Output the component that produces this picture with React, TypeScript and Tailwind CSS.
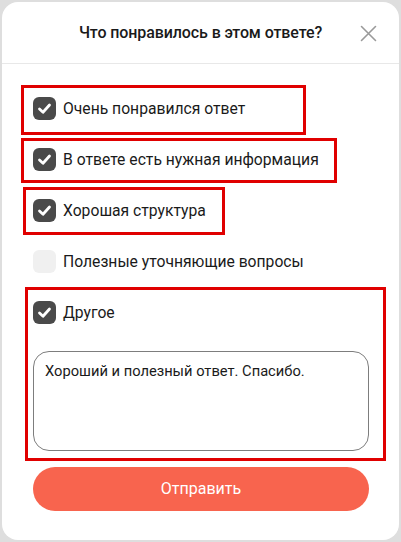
import React from "react";

const options = [
  { label: "Очень понравился ответ", checked: true },
  { label: "В ответе есть нужная информация", checked: true },
  { label: "Хорошая структура", checked: true },
  { label: "Полезные уточняющие вопросы", checked: false },
  { label: "Другое", checked: true },
];

function Checkbox({ checked }: { checked: boolean }) {
  if (!checked) {
    return <span className="block w-[23px] h-[23px] rounded-[6px] bg-[#f0f0f0]" />;
  }
  return (
    <span className="flex items-center justify-center w-[23px] h-[23px] rounded-[6px] bg-[#4a4a4a]">
      <svg width="23" height="23" viewBox="0 0 23 23" fill="none">
        <path
          d="M6.5 12 L10 15.2 L16.5 8"
          stroke="#ffffff"
          strokeWidth="2.8"
          strokeLinecap="round"
          strokeLinejoin="round"
        />
      </svg>
    </span>
  );
}

export default function App() {
  return (
    <div
      className="relative w-[401px] h-[542px] bg-[#dedede] overflow-hidden"
      style={{ fontFamily: "Roboto, 'Noto Sans', sans-serif" }}
    >
      <div className="absolute left-[2px] top-[2px] w-[397px] h-[538px] bg-white rounded-[16px] flex flex-col">
        {/* Header */}
        <div className="relative h-[61px] flex items-center justify-center">
          <h1 className="text-[16px] font-medium text-[#1a1a1a] tracking-[-0.1px]">
            Что понравилось в этом ответе?
          </h1>
          <button className="absolute right-[22px] top-[23px] w-[17px] h-[17px]">
            <svg width="17" height="17" viewBox="0 0 17 17" fill="none">
              <path d="M1.5 1.5 L15.5 15.5 M15.5 1.5 L1.5 15.5" stroke="#9a9a9a" strokeWidth="1.6" strokeLinecap="round" />
            </svg>
          </button>
        </div>
        <div className="h-px bg-[#e8e8e8]" />

        {/* Options */}
        <div className="flex flex-col pt-[19px] pl-[31px] pr-[30px]">
          {options.map((o) => (
            <label key={o.label} className="h-[51px] flex items-center gap-[7px]">
              <Checkbox checked={o.checked} />
              <span className="text-[15.7px] text-[#1a1a1a]">{o.label}</span>
            </label>
          ))}

          <div className="mt-[13px] h-[100px] rounded-[16px] border border-[#7d7d7d] px-[11px] pt-[8px]">
            <p className="text-[14.7px] text-[#1a1a1a]">Хороший и полезный ответ. Спасибо.</p>
          </div>

          <button className="mt-[16px] h-[44px] rounded-full bg-[#f8644e] text-white text-[16px] font-normal">
            Отправить
          </button>
        </div>
      </div>

      {/* Annotation boxes */}
      <div className="absolute left-[21px] top-[85px] w-[285px] h-[50px] border-[3px] border-[#e00000]" />
      <div className="absolute left-[21px] top-[138px] w-[316px] h-[45px] border-[3px] border-[#e00000]" />
      <div className="absolute left-[23px] top-[187px] w-[202px] h-[48px] border-[3px] border-[#e00000]" />
      <div className="absolute left-[25px] top-[287px] w-[361px] h-[174px] border-[3px] border-[#e00000]" />
    </div>
  );
}
